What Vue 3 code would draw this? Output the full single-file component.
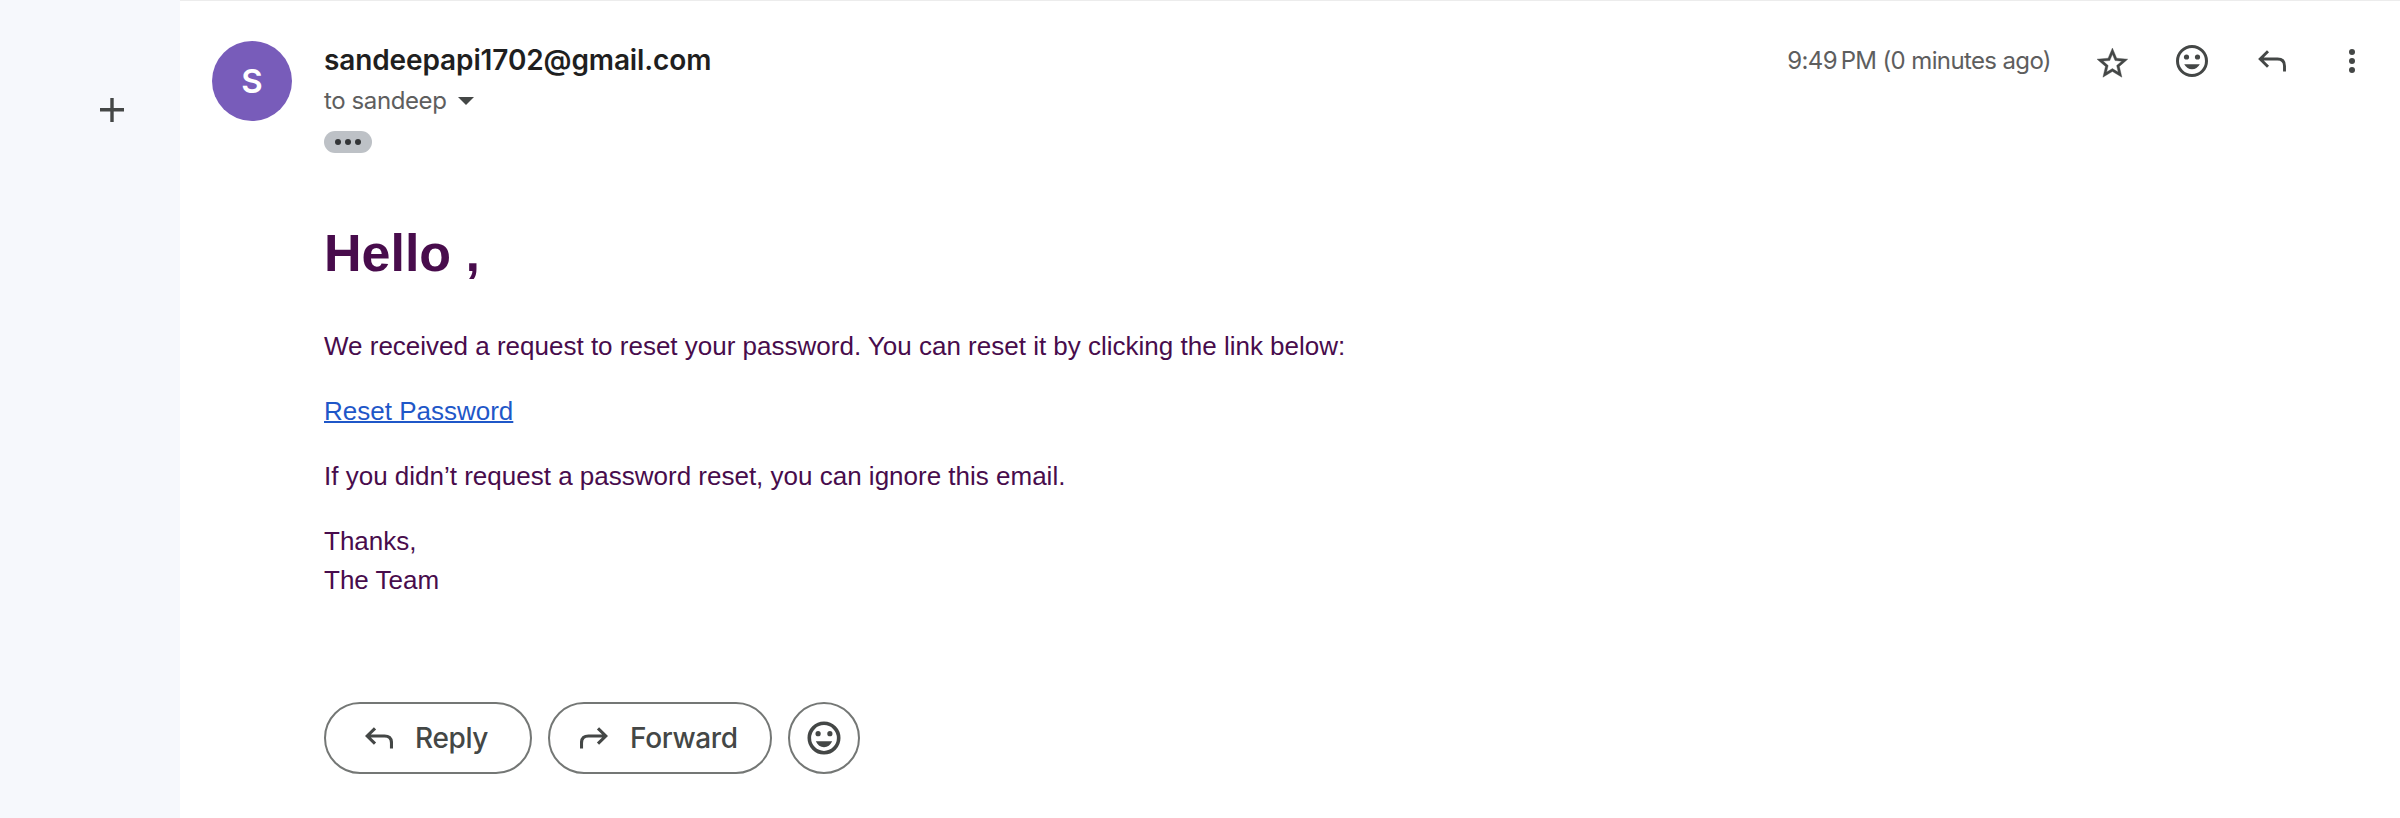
<script setup>
const starPath =
  'M22 9.24l-7.19-.62L12 2 9.19 8.63 2 9.24l5.46 4.73L5.82 21 12 17.27 18.18 21l-1.63-7.03L22 9.24zM12 15.4l-3.76 2.27 1-4.28-3.32-2.88 4.38-.38L12 6.1l1.71 4.04 4.38.38-3.32 2.88 1 4.28L12 15.4z'
const replyPath = 'M10 1.3 2.2 9l7.8 7.7M2.2 9H19.5Q26.5 9 26.5 16v5.5'
const paragraphs = {
  intro: 'We received a request to reset your password. You can reset it by clicking the link below:',
  ignore: 'If you didn’t request a password reset, you can ignore this email.',
}
</script>

<template>
  <div class="page">
    <aside class="rail">
      <svg class="plus" width="24" height="24" viewBox="0 0 24 24">
        <path d="M0 11.8H24M12 0V24" fill="none" stroke="#444746" stroke-width="3.4" />
      </svg>
    </aside>
    <main class="mail">
      <header class="head">
        <div class="avatar"><span>S</span></div>
        <div class="who">
          <div class="sender"><span>sandeepapi1702@gmail.com</span></div>
          <div class="to">
            <span>to sandeep</span>
            <svg width="16" height="8" viewBox="0 0 16 8"><path d="M0 0H16L8 8Z" fill="#444746" /></svg>
          </div>
          <button class="more" aria-label="Show trimmed content"><i></i><i></i><i></i></button>
        </div>
        <div class="actions">
          <span class="time">9:49&#8239;PM (0 minutes ago)</span>
          <div class="cell star">
            <svg width="36.8" height="36.8" viewBox="0 0 24 24">
              <path :d="starPath" fill="#444746" stroke="#444746" stroke-width="0.25" />
            </svg>
          </div>
          <div class="cell">
            <svg width="32" height="32" viewBox="-16 -16 32 32">
              <circle r="14.5" fill="none" stroke="#444746" stroke-width="3" />
              <g fill="#444746">
                <circle cx="-5.5" cy="-4" r="2.6" /><circle cx="5.5" cy="-4" r="2.6" />
                <path d="M-7.8 3.2H7.8Q5 8.2 0 8.2T-7.8 3.2Z" />
              </g>
            </svg>
          </div>
          <div class="cell">
            <svg width="28" height="22" viewBox="0 0 28 22">
              <path :d="replyPath" fill="none" stroke="#444746" stroke-width="2.9" />
            </svg>
          </div>
          <div class="cell">
            <svg width="6" height="24" viewBox="0 0 6 24" fill="#444746">
              <circle cx="3" cy="3" r="3" /><circle cx="3" cy="12" r="3" /><circle cx="3" cy="21" r="3" />
            </svg>
          </div>
        </div>
      </header>
      <article class="body">
        <h1>Hello ,</h1>
        <p>{{ paragraphs.intro }}</p>
        <p><a>Reset Password</a></p>
        <p>{{ paragraphs.ignore }}</p>
        <p>Thanks,<br />The Team</p>
      </article>
      <footer class="buttons">
        <button class="pill reply">
          <svg width="28" height="22" viewBox="0 0 28 22">
            <path :d="replyPath" fill="none" stroke="#444746" stroke-width="3.1" />
          </svg>
          <span>Reply</span>
        </button>
        <button class="pill forward">
          <svg width="28" height="22" viewBox="0 0 28 22">
            <path :d="replyPath" transform="matrix(-1 0 0 1 28 0)" fill="none" stroke="#444746" stroke-width="3.1" />
          </svg>
          <span>Forward</span>
        </button>
        <button class="pill round">
          <svg width="34" height="34" viewBox="-17 -17 34 34">
            <circle r="14.7" fill="none" stroke="#444746" stroke-width="3.6" />
            <g fill="#444746">
              <circle cx="-5.9" cy="-4.3" r="2.6" /><circle cx="5.9" cy="-4.3" r="2.6" />
              <path d="M-8.2 3.2H8.2C6.4 7 3.6 9.2 0 9.2S-6.4 7-8.2 3.2Z" />
            </g>
          </svg>
        </button>
      </footer>
    </main>
  </div>
</template>

<style>
body {
  margin: 0;
  background: #fff;
}
</style>

<style scoped>
.page {
  display: flex;
  width: 2400px;
  height: 818px;
  overflow: hidden;
  font-family: Inter, sans-serif;
  color: #444746;
}
.page svg {
  display: block;
  flex: none;
}
.rail {
  width: 180px;
  flex: none;
  background: #f6f8fc;
}
.plus {
  margin: 98px 0 0 100px;
}
.mail {
  flex: 1;
  box-sizing: border-box;
  border-top: 1px solid #ececec;
  background: #fff;
}
.head {
  display: flex;
  height: 153px;
  padding: 0 8px 0 32px;
}
.avatar {
  width: 80px;
  height: 80px;
  margin-top: 40px;
  border-radius: 50%;
  background: #785cba;
  color: #fff;
  font-size: 33px;
  font-weight: 600;
  line-height: 81px;
  text-align: center;
  flex: none;
}
.who {
  margin-left: 32px;
  padding-top: 39px;
}
.sender {
  height: 40px;
  line-height: 40px;
  font-size: 28px;
  font-weight: 600;
  letter-spacing: -0.12px;
  color: #1f1f1f;
}
.to {
  display: flex;
  align-items: center;
  gap: 12px;
  height: 42px;
  line-height: 42px;
  font-size: 24px;
  letter-spacing: -0.4px;
  color: #5e5e5e;
}
.more {
  display: flex;
  align-items: center;
  justify-content: center;
  gap: 3.5px;
  width: 48px;
  height: 22px;
  margin-top: 9px;
  padding: 0;
  border: 0;
  border-radius: 11px;
  background: #bdc1c6;
}
.more i {
  width: 6.6px;
  height: 6.6px;
  border-radius: 50%;
  background: #333537;
}
.actions {
  display: flex;
  align-items: center;
  height: 48px;
  margin: 36px 0 0 auto;
}
.time {
  margin-right: 21px;
  font-size: 24px;
  line-height: 48px;
  letter-spacing: -0.63px;
  white-space: nowrap;
  color: #5e5e5e;
}
.cell {
  display: flex;
  align-items: center;
  justify-content: center;
  width: 80px;
  height: 48px;
}
.star {
  box-sizing: border-box;
  padding-top: 4px;
}
.body {
  margin: 60px 0 0 144px;
  height: 488px;
  font-family: "Liberation Sans", Arial, sans-serif;
  font-size: 26px;
  line-height: 39px;
  color: #480c4c;
}
.body h1 {
  margin: 0 0 35px;
  font-size: 52px;
  line-height: 78px;
}
.body p {
  margin: 0 0 26px;
}
.body a {
  color: #1f57c8;
  text-decoration: underline;
  text-decoration-thickness: 2px;
}
.buttons {
  display: flex;
  gap: 16px;
  margin-left: 144px;
}
.pill {
  display: flex;
  align-items: center;
  box-sizing: border-box;
  height: 72px;
  padding: 0 0 0 39px;
  border: 2px solid #747775;
  border-radius: 36px;
  background: #fff;
  color: #444746;
  font-family: inherit;
  font-size: 28px;
  font-weight: 500;
  letter-spacing: -0.35px;
}
.pill span {
  margin-left: 22px;
}
.reply {
  width: 208px;
}
.forward {
  width: 224px;
  padding-left: 30px;
}
.round {
  width: 72px;
  padding: 0;
  justify-content: center;
}
</style>
